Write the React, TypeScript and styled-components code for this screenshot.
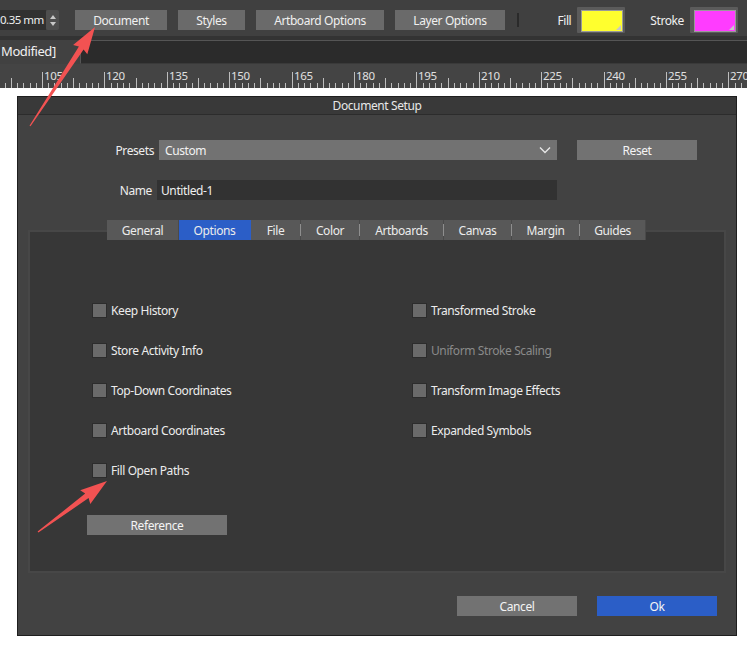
import React from 'react';
import styled, { createGlobalStyle, css } from 'styled-components';

const FONT = `"Segoe UI", "Noto Sans", "Open Sans", sans-serif`;

const GlobalStyle = createGlobalStyle`
  html, body {
    margin: 0;
    padding: 0;
    background: #ffffff;
  }
  body {
    font-family: ${FONT};
    font-size: 12px;
    letter-spacing: -0.4px;
    color: #e6e6e6;
  }
  * {
    box-sizing: border-box;
  }
`;

const Page = styled.div`
  position: relative;
  width: 747px;
  height: 651px;
  overflow: hidden;
  background: #ffffff;
`;

/* ---------- top toolbar ---------- */

const Toolbar = styled.div`
  height: 36px;
  background: #404040;
  display: flex;
  align-items: center;
  padding: 4px 9px 0 0;
`;

const UnitField = styled.div`
  display: flex;
  height: 20px;
  margin-right: 16px;
`;

const UnitInput = styled.div`
  width: 46px;
  background: #313131;
  color: #eeeeee;
  line-height: 20px;
  font-size: 11.5px;
  letter-spacing: -0.5px;
  white-space: nowrap;
`;

const Spinner = styled.div`
  width: 13px;
  background: #4e4e4e;
  border-radius: 2px;
  display: flex;
  flex-direction: column;
  align-items: center;
  justify-content: center;
  gap: 3px;
`;

const SpinArrow = styled.span<{ $down?: boolean }>`
  width: 0;
  height: 0;
  border-left: 3px solid transparent;
  border-right: 3px solid transparent;
  ${(p) =>
    p.$down
      ? css`border-top: 4px solid #c8c8c8;`
      : css`border-bottom: 4px solid #c8c8c8;`}
`;

const ToolButton = styled.div<{ $w: number }>`
  width: ${(p) => p.$w}px;
  height: 20px;
  margin-right: 11px;
  background: #6a6a6a;
  color: #f0f0f0;
  display: flex;
  align-items: center;
  justify-content: center;
  white-space: nowrap;
`;

const Divider = styled.div`
  width: 2px;
  height: 14px;
  background: #2a2a2a;
  margin-left: 1px;
`;

const Spacer = styled.div`
  flex: 1;
`;

const SwatchLabel = styled.span`
  color: #f0f0f0;
  margin-right: 6px;
`;

const Swatch = styled.div<{ $color: string; $gap?: number }>`
  position: relative;
  width: 48px;
  height: 26px;
  background: #5b5b5b;
  border-radius: 1px;
  padding: 3px 4px;
  margin-right: ${(p) => p.$gap ?? 0}px;
  &::before {
    content: '';
    display: block;
    width: 100%;
    height: 100%;
    background: ${(p) => p.$color};
    border: 1px solid #9a9a9a;
  }
  &::after {
    content: '';
    position: absolute;
    right: 4px;
    bottom: 3px;
    border-left: 5px solid transparent;
    border-bottom: 5px solid #c8c8c8;
  }
`;

/* ---------- document tabs + ruler ---------- */

const DocTabBar = styled.div`
  height: 28px;
  background: #333333;
  display: flex;
  align-items: flex-end;
`;

const DocTab = styled.div`
  width: 80px;
  height: 24px;
  background: #414141;
  color: #f0f0f0;
  line-height: 22px;
  padding-left: 1px;
  white-space: nowrap;
  overflow: hidden;
  font-size: 13px;
`;

const DocTabRest = styled.div`
  flex: 1;
  height: 24px;
  background: #2b2b2b;
  border-top: 1px solid #555555;
  border-left: 1px solid #555555;
  border-bottom: 1px solid #3a3a3a;
`;

const RulerBar = styled.div`
  height: 24px;
  background: #444444;
  svg {
    display: block;
  }
`;

/* ---------- dialog ---------- */

const Stage = styled.div`
  padding: 8px 10px 0 17px;
`;

const Dialog = styled.div`
  width: 720px;
  height: 540px;
  border: 1px solid #1f1f1f;
  background: #424242;
  display: flex;
  flex-direction: column;
`;

const TitleBar = styled.div`
  height: 18px;
  background: #393939;
  border-bottom: 1px solid #2c2c2c;
  color: #e8e8e8;
  display: flex;
  align-items: center;
  justify-content: center;
`;

const Body = styled.div`
  flex: 1;
  display: flex;
  flex-direction: column;
  padding: 25px 19px 19px 10px;
`;

const FormRow = styled.div`
  display: flex;
  align-items: center;
  height: 20px;
  margin-bottom: 20px;
`;

const FieldLabel = styled.span<{ $w: number }>`
  width: ${(p) => p.$w}px;
  text-align: right;
  color: #eeeeee;
  margin-right: 5px;
  white-space: nowrap;
`;

const Select = styled.div`
  width: 398px;
  height: 20px;
  background: #727272;
  color: #f2f2f2;
  display: flex;
  align-items: center;
  justify-content: space-between;
  padding: 0 6px;
  margin-right: 20px;
`;

const TextInput = styled.div`
  width: 400px;
  height: 20px;
  background: #323232;
  color: #f0f0f0;
  display: flex;
  align-items: center;
  padding: 0 4px;
`;

const Button = styled.div<{ $primary?: boolean; $w?: number }>`
  width: ${(p) => p.$w ?? 120}px;
  height: 20px;
  background: ${(p) => (p.$primary ? '#2b5ec7' : '#727272')};
  color: #f4f4f4;
  display: flex;
  align-items: center;
  justify-content: center;
`;

const TabStrip = styled.div`
  display: flex;
  height: 20px;
  margin-left: 79px;
  position: relative;
  z-index: 1;
`;

const Tab = styled.div<{ $w: number; $active?: boolean; $sep?: boolean }>`
  position: relative;
  width: ${(p) => p.$w}px;
  height: 20px;
  background: ${(p) => (p.$active ? '#2b5ec7' : '#585858')};
  border-right: 1px solid ${(p) => (p.$active ? '#2b5ec7' : '#4a4a4a')};
  color: #ececec;
  display: flex;
  align-items: center;
  justify-content: center;
  ${(p) =>
    p.$sep &&
    css`
      &::before {
        content: '';
        position: absolute;
        left: -1px;
        top: 4px;
        width: 1px;
        height: 12px;
        background: #8e8e8e;
      }
    `}
`;

const Panel = styled.div`
  margin-top: -10px;
  height: 343px;
  width: 698px;
  background: #373737;
  border: 2px solid #474747;
  padding: 71px 0 0 57px;
  display: flex;
  flex-direction: column;
`;

const OptionGrid = styled.div`
  display: grid;
  grid-template-columns: 320px 320px;
  grid-auto-rows: 15px;
  row-gap: 25px;
  padding-left: 5px;
`;

const Option = styled.div<{ $disabled?: boolean }>`
  display: flex;
  align-items: center;
  gap: 4px;
  color: ${(p) => (p.$disabled ? '#8a8a8a' : '#ececec')};
  white-space: nowrap;
`;

const CheckBox = styled.span`
  width: 15px;
  height: 15px;
  flex: none;
  background: #6a6a6a;
  border: 1px solid #2c2c2c;
`;

const PanelButtonRow = styled.div`
  margin-top: 37px;
`;

const Footer = styled.div`
  margin-top: auto;
  display: flex;
  justify-content: flex-end;
  gap: 20px;
`;

const Overlay = styled.svg`
  position: absolute;
  left: 0;
  top: 0;
  pointer-events: none;
`;

/* ---------- pieces ---------- */

const Ruler = () => {
  const origin = 42;
  const step = 6.24;
  const ticks: React.ReactNode[] = [];
  for (let k = -7; origin + k * step < 747; k++) {
    const x = Math.round(origin + k * step) + 0.5;
    const major = k % 10 === 0;
    const mid = !major && Math.abs(k % 5) === 0;
    const top = major ? 8 : mid ? 14 : 19;
    ticks.push(<line key={k} x1={x} x2={x} y1={top} y2={24} stroke="#bdbdbd" strokeWidth={1} />);
    if (major) {
      ticks.push(
        <text key={`t${k}`} x={x + 1.5} y={16} fill="#e0e0e0" fontSize={11.5} fontFamily={FONT} letterSpacing={-0.3}>
          {105 + (k / 10) * 15}
        </text>
      );
    }
  }
  return (
    <svg width={747} height={24}>
      {ticks}
    </svg>
  );
};

const arrowPoints = (tx: number, ty: number, px: number, py: number) => {
  const dx = px - tx;
  const dy = py - ty;
  const len = Math.hypot(dx, dy);
  const ux = dx / len;
  const uy = dy / len;
  const nx = -uy;
  const ny = ux;
  const headLen = 25;
  const bx = px - ux * headLen;
  const by = py - uy * headLen;
  const pt = (x: number, y: number, w: number) => `${(x + nx * w).toFixed(1)},${(y + ny * w).toFixed(1)}`;
  return [
    pt(tx, ty, 0.6),
    pt(bx, by, 2.8),
    pt(bx - ux * 2, by - uy * 2, 8.5),
    `${px},${py}`,
    pt(bx - ux * 2, by - uy * 2, -8.5),
    pt(bx, by, -2.8),
    pt(tx, ty, -0.6),
  ].join(' ');
};

const options = [
  { left: 'Keep History', right: 'Transformed Stroke' },
  { left: 'Store Activity Info', right: 'Uniform Stroke Scaling', disabled: true },
  { left: 'Top-Down Coordinates', right: 'Transform Image Effects' },
  { left: 'Artboard Coordinates', right: 'Expanded Symbols' },
  { left: 'Fill Open Paths' },
];

const tabs = [
  { label: 'General', w: 72 },
  { label: 'Options', w: 72, active: true },
  { label: 'File', w: 50 },
  { label: 'Color', w: 59 },
  { label: 'Artboards', w: 84 },
  { label: 'Canvas', w: 68 },
  { label: 'Margin', w: 68 },
  { label: 'Guides', w: 66 },
];

export default function App() {
  return (
    <Page>
      <GlobalStyle />
      <Toolbar>
        <UnitField>
          <UnitInput>0.35 mm</UnitInput>
          <Spinner>
            <SpinArrow />
            <SpinArrow $down />
          </Spinner>
        </UnitField>
        <ToolButton $w={92}>Document</ToolButton>
        <ToolButton $w={67}>Styles</ToolButton>
        <ToolButton $w={128}>Artboard Options</ToolButton>
        <ToolButton $w={110}>Layer Options</ToolButton>
        <Divider />
        <Spacer />
        <SwatchLabel>Fill</SwatchLabel>
        <Swatch $color="#ffff2e" $gap={25} />
        <SwatchLabel>Stroke</SwatchLabel>
        <Swatch $color="#ff3cff" />
      </Toolbar>

      <DocTabBar>
        <DocTab>Modified]</DocTab>
        <DocTabRest />
      </DocTabBar>

      <RulerBar>
        <Ruler />
      </RulerBar>

      <Stage>
        <Dialog>
          <TitleBar>Document Setup</TitleBar>
          <Body>
            <FormRow>
              <FieldLabel $w={126}>Presets</FieldLabel>
              <Select>
                <span>Custom</span>
                <svg width="12" height="8" viewBox="0 0 12 8">
                  <polyline points="1,1.5 6,6.5 11,1.5" fill="none" stroke="#e6e6e6" strokeWidth="1.4" />
                </svg>
              </Select>
              <Button>Reset</Button>
            </FormRow>
            <FormRow>
              <FieldLabel $w={124}>Name</FieldLabel>
              <TextInput>Untitled-1</TextInput>
            </FormRow>

            <TabStrip>
              {tabs.map((t, i) => (
                <Tab
                  key={t.label}
                  $w={t.w}
                  $active={t.active}
                  $sep={i > 0 && !t.active && !tabs[i - 1].active}
                >
                  {t.label}
                </Tab>
              ))}
            </TabStrip>

            <Panel>
              <OptionGrid>
                {options.map((o) => (
                  <React.Fragment key={o.left}>
                    <Option>
                      <CheckBox />
                      {o.left}
                    </Option>
                    {o.right ? (
                      <Option $disabled={o.disabled}>
                        <CheckBox />
                        {o.right}
                      </Option>
                    ) : (
                      <span />
                    )}
                  </React.Fragment>
                ))}
              </OptionGrid>
              <PanelButtonRow>
                <Button $w={140}>Reference</Button>
              </PanelButtonRow>
            </Panel>

            <Footer>
              <Button>Cancel</Button>
              <Button $primary>Ok</Button>
            </Footer>
          </Body>
        </Dialog>
      </Stage>

      <Overlay width={747} height={651}>
        <polygon points={arrowPoints(30, 126, 95, 27)} fill="#f25252" />
        <polygon points={arrowPoints(38, 532, 107, 481)} fill="#f25252" />
      </Overlay>
    </Page>
  );
}
